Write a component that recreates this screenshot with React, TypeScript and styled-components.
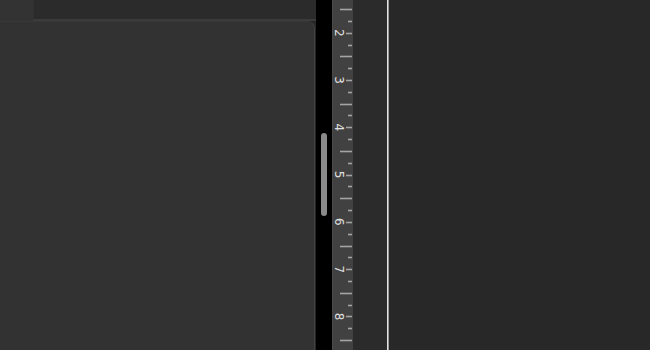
import { FC } from "react";
import styled, { createGlobalStyle } from "styled-components";

const GlobalStyle = createGlobalStyle`
  html, body {
    margin: 0;
    padding: 0;
    background: #282828;
    overflow: hidden;
  }
`;

const Frame = styled.div`
  display: flex;
  flex-direction: row;
  width: 650px;
  height: 350px;
  background: #282828;
  font-family: "Liberation Sans", Arial, sans-serif;
`;

const LeftColumn = styled.div`
  display: flex;
  flex-direction: column;
  width: 316px;
  background: #262626;
`;

const TopRow = styled.div`
  display: flex;
  flex-direction: row;
  height: 21px;
  background: #333333;
`;

const TopSpacer = styled.div`
  width: 33px;
  background: #333333;
`;

const TopStrip = styled.div`
  flex: 1;
  background: #2b2b2b;
  border-bottom: 2px solid #3b3b3b;
  box-shadow: inset 1px 0 0 #303030;
`;

const Panel = styled.div`
  flex: 1;
  background: #323232;
  border-top-right-radius: 7px;
  border-right: 1px solid #424242;
  border-top: 1px solid #383838;
  margin-right: 1px;
`;

const ScrollTrack = styled.div`
  display: flex;
  flex-direction: column;
  align-items: center;
  width: 16px;
  padding-top: 133px;
  box-sizing: border-box;
  background: #000000;
`;

const ScrollThumb = styled.div<{ $height: number }>`
  width: 6px;
  height: ${(p) => p.$height}px;
  border-radius: 3px;
  background: #8a8a8a;
`;

const RulerBox = styled.div`
  width: 21px;
  background: #414141;
  box-shadow: inset 1px 0 0 #4a4a4a;
`;

const Gutter = styled.div`
  width: 34px;
  background: #2b2b2b;
`;

const Divider = styled.div`
  width: 2px;
  background: linear-gradient(to right, #e2e2e2 0 50%, #9a9a9a 50% 100%);
`;

const RightPane = styled.div`
  flex: 1;
  background: #282828;
`;

const STEP = 47.3 / 4;
const BASE_Y = 32.7;

const Ruler: FC = () => {
  const ticks = [];
  const labels = [];
  for (let n = -3; n <= 27; n++) {
    const y = BASE_Y + n * STEP;
    const mod = ((n % 4) + 4) % 4;
    const len = mod === 0 ? 6 : mod === 2 ? 12 : 4;
    ticks.push(
      <line
        key={`t${n}`}
        x1={20 - len}
        x2={20}
        y1={Math.round(y) + 0.5}
        y2={Math.round(y) + 0.5}
        stroke="#a4a4a4"
        strokeWidth={1.6}
      />
    );
    if (mod === 0) {
      const value = 2 + n / 4;
      labels.push(
        <text
          key={`l${n}`}
          x={0}
          y={0}
          transform={`translate(3 ${y}) rotate(90)`}
          textAnchor="middle"
          fontSize={12}
          fill="#e0e0e0"
          fontFamily="'DejaVu Sans', sans-serif"
        >
          {value}
        </text>
      );
    }
  }
  return (
    <RulerBox>
      <svg width="21" height="350" viewBox="0 0 21 350">
        {ticks}
        {labels}
      </svg>
    </RulerBox>
  );
};

const App: FC = () => {
  return (
    <>
      <GlobalStyle />
      <Frame>
        <LeftColumn>
          <TopRow>
            <TopSpacer />
            <TopStrip />
          </TopRow>
          <Panel />
        </LeftColumn>
        <ScrollTrack>
          <ScrollThumb $height={83} />
        </ScrollTrack>
        <Ruler />
        <Gutter />
        <Divider />
        <RightPane />
      </Frame>
    </>
  );
};

export default App;
